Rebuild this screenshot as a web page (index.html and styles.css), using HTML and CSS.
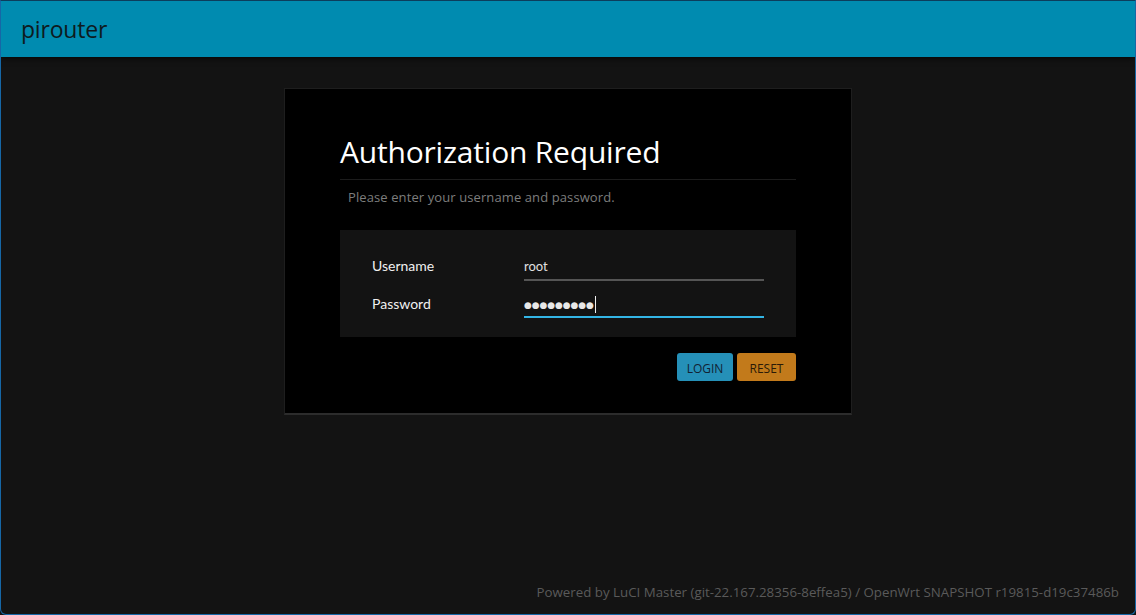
FILE: index.html
```html
<!DOCTYPE html>
<html>
<head>
<meta charset="utf-8">
<link rel="stylesheet" href="styles.css">
</head>
<body>
<div class="window">
  <header class="topbar"><span class="brand">pirouter</span></header>
  <main class="main">
    <form class="card">
      <h2 class="title">Authorization Required</h2>
      <p class="desc">Please enter your username and password.</p>
      <div class="fields">
        <div class="row">
          <label class="label">Username</label>
          <div class="input"><span class="value user">root</span></div>
        </div>
        <div class="row">
          <label class="label">Password</label>
          <div class="input focus"><span class="value dots">●●●●●●●●●</span><span class="caret"></span></div>
        </div>
      </div>
      <div class="actions">
        <button type="button" class="btn login">LOGIN</button>
        <button type="button" class="btn reset">RESET</button>
      </div>
    </form>
    <footer class="footer">Powered by LuCI Master (git-22.167.28356-8effea5) / OpenWrt SNAPSHOT r19815-d19c37486b</footer>
  </main>
</div>
</body>
</html>
```
FILE: styles.css
```css
html, body { margin: 0; padding: 0; background: #131313; }
.window {
  width: 1136px; height: 615px; box-sizing: border-box;
  border: 1px solid #1667a6; border-top-color: #0c3d5c;
  border-radius: 0 0 6px 6px;
  display: flex; flex-direction: column;
  background: #131313; overflow: hidden;
  font-family: "Open Sans", "Noto Sans", sans-serif;
}
.topbar {
  height: 56px; flex: none; background: #008bb0;
  display: flex; align-items: center; padding-left: 20px;
  box-shadow: 0 1px 6px rgba(0,0,0,0.8);
  position: relative; z-index: 1;
}
.brand { font-size: 23px; color: #0e1a20; letter-spacing: -0.2px; }
.main { flex: 1; display: flex; flex-direction: column; align-items: center; padding-top: 31px; }
.card {
  width: 568px; height: 327px; box-sizing: border-box;
  background: #000; border: 1px solid #1e1e1e; border-bottom: 2px solid #2c2c2c;
  padding: 40px 55px 0 55px; margin: 0;
}
.title {
  margin: 0; font-weight: 400; font-size: 30px; line-height: 46px; color: #fff;
  letter-spacing: -0.2px;
  border-bottom: 1px solid #1c1c1c; padding-bottom: 4px;
}
.desc { margin: 0; padding: 6px 8px 0; font-size: 13px; line-height: 22px; color: #7d7d7d; letter-spacing: 0.1px; }
.fields {
  margin-top: 22px; background: #131313; height: 107px; box-sizing: border-box;
  padding: 25px 32px 0 32px;
  display: flex; flex-direction: column; gap: 12px;
  font-family: Lato, "Open Sans", sans-serif;
}
.row { display: flex; align-items: flex-start; height: 26px; }
.label { width: 152px; font-size: 14px; color: #f0f0f0; line-height: 20px; padding-top: 1px; }
.input {
  width: 240px; height: 25px; box-sizing: border-box; border-bottom: 2px solid #555;
  display: flex; align-items: center; font-size: 13px; color: #e0e0e0;
}
.row:first-child .input { height: 26px; }
.user { margin-top: -2px; }
.input.focus { border-bottom-color: #33b5e5; }
.value { line-height: 20px; }
.dots { font-family: "DejaVu Sans", sans-serif; font-size: 8.9px; color: #e8e8e8; }
.caret { width: 1px; height: 17px; background: #eee; margin-left: 1px; }
.actions { display: flex; justify-content: flex-end; gap: 4px; margin-top: 16px; }
.btn {
  height: 28px; border: none; border-radius: 3px; padding: 0; font-size: 12px;
  font-family: "Open Sans", "Noto Sans", sans-serif; color: #122233; cursor: pointer;
  line-height: 30px; padding-top: 1px;
}
.login { width: 56px; background: #2590b8; }
.reset { width: 59px; background: #c27a1b; color: #2a1a08; }
.footer {
  margin-top: auto; align-self: stretch; text-align: right;
  padding: 0 16px 13px 0; font-size: 13.3px; color: #5a5a5a;
}
```
